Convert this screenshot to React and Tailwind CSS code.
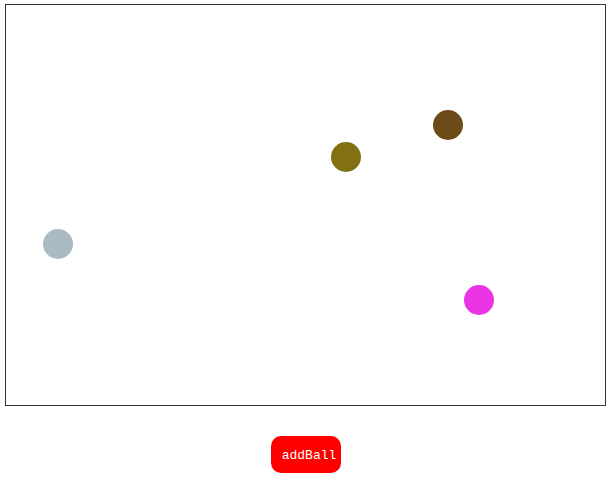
import React, { useState } from 'react'

// centres in page coordinates
const initialBalls = [
  { x: 58, y: 245, color: '#aabbc3' },
  { x: 346, y: 158, color: '#817112' },
  { x: 448, y: 126, color: '#6c4b19' },
  { x: 479, y: 301, color: '#ea33e5' },
]

export default function App() {
  const [balls, setBalls] = useState(initialBalls)

  const addBall = () => {
    const c = '#' + Math.floor(Math.random() * 0xffffff).toString(16).padStart(6, '0')
    setBalls([...balls, { x: 21 + Math.random() * 570, y: 20 + Math.random() * 370, color: c }])
  }

  return (
    <div className="min-h-screen bg-white pt-[4px] pl-[5px]">
      <div className="relative w-[601px] h-[402px] border border-[#333333]">
        {balls.map((b, i) => (
          <div
            key={i}
            className="absolute w-[30px] h-[30px] rounded-full"
            style={{ left: b.x - 21, top: b.y - 21, backgroundColor: b.color }}
          />
        ))}
      </div>
      <div className="flex justify-center w-[602px] mt-[30px]">
        <button
          onClick={addBall}
          className="w-[70px] h-[37px] pl-[6px] pt-[3px] rounded-[10px] bg-[#ff0000] text-white text-[13px] font-['Liberation_Mono',monospace]"
        >
          addBall
        </button>
      </div>
    </div>
  )
}
